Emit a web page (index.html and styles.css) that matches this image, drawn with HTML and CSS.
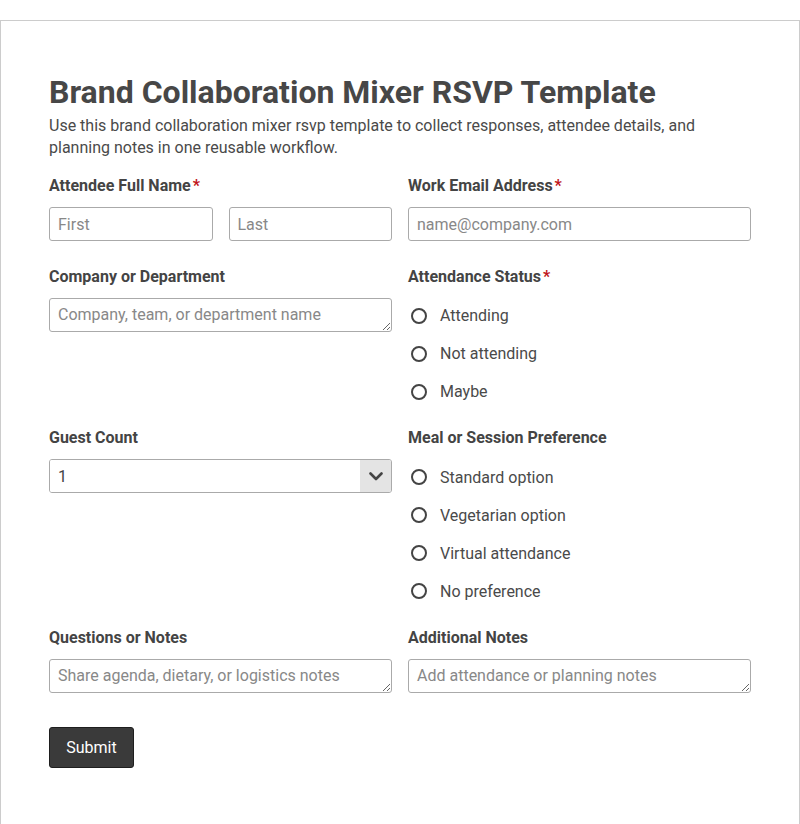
FILE: index.html
```html
<!DOCTYPE html>
<html lang="en">
<head>
    <meta charset="UTF-8">
    <meta name="viewport" content="width=device-width, initial-scale=1.0">
    <title>Brand Collaboration Mixer RSVP Template</title>
    <link rel="stylesheet" href="styles.css">
</head>
<body>
    <form class="form-card">
        <h1>Brand Collaboration Mixer RSVP Template</h1>
        <p class="intro">Use this brand collaboration mixer rsvp template to collect responses, attendee details, and planning notes in one reusable workflow.</p>

        <div class="grid">
            <div class="field">
                <label class="field-label">Attendee Full Name<span class="req">*</span></label>
                <div class="name-row">
                    <input type="text" placeholder="First">
                    <input type="text" placeholder="Last">
                </div>
            </div>
            <div class="field">
                <label class="field-label">Work Email Address<span class="req">*</span></label>
                <input type="email" placeholder="name@company.com">
            </div>

            <div class="field">
                <label class="field-label">Company or Department</label>
                <textarea rows="1" placeholder="Company, team, or department name"></textarea>
            </div>
            <div class="field">
                <label class="field-label">Attendance Status<span class="req">*</span></label>
                <div class="radio-list">
                    <label class="radio"><input type="radio" name="status"> Attending</label>
                    <label class="radio"><input type="radio" name="status"> Not attending</label>
                    <label class="radio"><input type="radio" name="status"> Maybe</label>
                </div>
            </div>

            <div class="field">
                <label class="field-label">Guest Count</label>
                <div class="select-wrap">
                    <select>
                        <option>1</option>
                        <option>2</option>
                        <option>3</option>
                        <option>4</option>
                    </select>
                    <span class="select-arrow">
                        <svg width="14" height="9" viewBox="0 0 14 9"><path d="M1.5 1.5 L7 7 L12.5 1.5" fill="none" stroke="#444" stroke-width="2.6" stroke-linecap="round" stroke-linejoin="round"/></svg>
                    </span>
                </div>
            </div>
            <div class="field">
                <label class="field-label">Meal or Session Preference</label>
                <div class="radio-list">
                    <label class="radio"><input type="radio" name="meal"> Standard option</label>
                    <label class="radio"><input type="radio" name="meal"> Vegetarian option</label>
                    <label class="radio"><input type="radio" name="meal"> Virtual attendance</label>
                    <label class="radio"><input type="radio" name="meal"> No preference</label>
                </div>
            </div>

            <div class="field">
                <label class="field-label">Questions or Notes</label>
                <textarea rows="1" placeholder="Share agenda, dietary, or logistics notes"></textarea>
            </div>
            <div class="field">
                <label class="field-label">Additional Notes</label>
                <textarea rows="1" placeholder="Add attendance or planning notes"></textarea>
            </div>
        </div>

        <button type="submit" class="submit-btn">Submit</button>
    </form>
</body>
</html>
```

FILE: styles.css
```css
:root {
    --text-color: #444;
    --border-color: #aaa;
    --placeholder: #888;
    --required: #c0161b;
}

* {
    box-sizing: border-box;
    margin: 0;
    padding: 0;
}

body {
    font-family: Roboto, 'Noto Sans', sans-serif;
    color: var(--text-color);
    background: #fff;
    padding-top: 20px;
}

.form-card {
    width: 800px;
    border: 1px solid #ccc;
    padding: 52px 48px 56px;
    min-height: 804px;
}

h1 {
    font-size: 32px;
    line-height: 38px;
    font-weight: 700;
    color: #474747;
}

.intro {
    font-size: 16px;
    line-height: 22px;
    margin-top: 4px;
    margin-bottom: 17px;
    color: #4a4a4a;
}

.grid {
    display: grid;
    grid-template-columns: 1fr 1fr;
    column-gap: 16px;
    row-gap: 25.5px;
}

.field-label {
    display: block;
    font-size: 16px;
    line-height: 20px;
    font-weight: 700;
    margin-bottom: 11px;
}

.req {
    color: var(--required);
    margin-left: 2px;
}

.name-row {
    display: flex;
    gap: 16px;
}

input[type="text"],
input[type="email"],
textarea {
    display: block;
    width: 100%;
    height: 34px;
    border: 1px solid var(--border-color);
    border-radius: 3px;
    padding: 6px 8px;
    font-family: inherit;
    font-size: 16px;
    line-height: 20px;
    color: var(--text-color);
    background: #fff;
}

textarea {
    resize: vertical;
    overflow: hidden;
}

::placeholder {
    color: var(--placeholder);
    opacity: 1;
}

.select-wrap {
    display: flex;
    height: 34px;
    border: 1px solid var(--border-color);
    border-radius: 3px;
    overflow: hidden;
}

.select-wrap select {
    flex: 1;
    appearance: none;
    border: none;
    background: #fff;
    padding: 0 8px;
    font-family: inherit;
    font-size: 16px;
    color: var(--text-color);
    outline: none;
}

.select-arrow {
    width: 31px;
    background: #e4e4e4;
    display: flex;
    align-items: center;
    justify-content: center;
}

.radio-list {
    display: flex;
    flex-direction: column;
    gap: 16px;
    padding-top: 7px;
}

.radio {
    display: flex;
    align-items: center;
    gap: 13px;
    height: 22px;
    font-size: 16px;
    padding-left: 3px;
    color: #4a4a4a;
}

.radio input {
    appearance: none;
    width: 16px;
    height: 16px;
    border: 2px solid #444;
    border-radius: 50%;
    margin: 0;
    flex-shrink: 0;
}

.submit-btn {
    margin-top: 34px;
    background: #3a3a3a;
    color: #fff;
    border: 1px solid #1e1e1e;
    border-radius: 3px;
    width: 85px;
    height: 41px;
    font-family: inherit;
    font-size: 16px;
    cursor: pointer;
}
```
